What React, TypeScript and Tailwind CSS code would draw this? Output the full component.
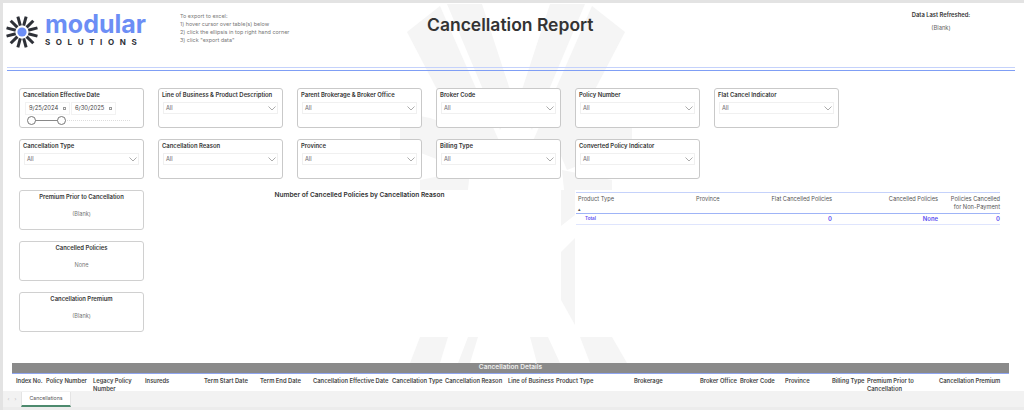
const filters1 = ["Line of Business & Product Description", "Parent Brokerage & Broker Office", "Broker Code", "Policy Number", "Flat Cancel Indicator"];
const filters2 = ["Cancellation Type", "Cancellation Reason", "Province", "Billing Type", "Converted Policy Indicator"];
const kpis = [
  ["Premium Prior to Cancellation", "(Blank)"],
  ["Cancelled Policies", "None"],
  ["Cancellation Premium", "(Blank)"],
];
const cols: [string, string?][] = [
  ["Index No."], ["Policy Number"], ["Legacy Policy", "Number"], ["Insureds"], ["Term Start Date"], ["Term End Date"],
  ["Cancellation Effective Date"], ["Cancellation Type"], ["Cancellation Reason"], ["Line of Business"], ["Product Type"],
  ["Brokerage"], ["Broker Office"], ["Broker Code"], ["Province"], ["Billing Type"], ["Premium Prior to", "Cancellation"], ["Cancellation Premium"],
];

function Chevron() {
  return (
    <svg width="8" height="5" viewBox="0 0 8 5" fill="none" stroke="#888" strokeWidth="0.7">
      <path d="M0.5 0.5 L4 4 L7.5 0.5" />
    </svg>
  );
}

function Logo() {
  return (
    <svg width="34" height="34" viewBox="-17 -17 34 34">
      {[15, 45, 75, 105, 135, 165, 195, 225, 255, 285, 315, 345].map((a) => (
        <line key={a} x1="0" y1="-6.5" x2="0" y2="-16" stroke="#2e3138" strokeWidth="3" transform={`rotate(${a})`} />
      ))}
      <circle r="4.6" fill="#6c8ef5" />
    </svg>
  );
}

const shards = [
  "407,32 440,6 503,150 480,172",
  "447,4 482,4 515,105 500,130",
  "625,32 592,6 529,150 552,172",
  "585,4 550,4 517,105 532,130",
  "400,112 430,118 480,135 465,170 400,145",
  "632,112 602,118 552,135 567,170 632,145",
  "420,180 470,170 468,190 420,190",
  "612,180 562,170 564,190 612,190",
  "410,363 420,337 448,337 440,363",
  "458,363 468,337 478,337 470,363",
  "537,363 530,337 548,337 560,363",
  "590,363 580,337 612,337 627,363",
  "561,190 575,190 575,215 561,226",
  "561,252 575,238 575,325 561,300",
];

function Watermark() {
  return (
    <svg className="absolute left-[-3px] top-[-3px]" width="1024" height="410" viewBox="0 0 1024 410">
      {shards.map((p) => <polygon key={p} points={p} fill="#f5f5f5" />)}
    </svg>
  );
}

function Slicer({ title }: { title: string }) {
  return (
    <div className="h-[40px] rounded-[3px] border border-[#c9c9c9] bg-white px-[3px] pt-[1px]">
      <div className="text-[5.9px] leading-[9px] font-semibold whitespace-nowrap text-[#333]">{title}</div>
      <div className="mt-[3px] mx-[1px] flex h-[12px] items-center justify-between border border-[#f0f0f0] px-[2px] pr-[1px]">
        <span className="text-[5.6px] text-[#666]">All</span>
        <Chevron />
      </div>
    </div>
  );
}

function DateField({ value }: { value: string }) {
  return (
    <div className="flex h-[13px] w-[45px] items-center justify-between border border-[#f2f2f2] px-[3px]">
      <span className="text-[5.8px] whitespace-nowrap text-[#444]">{value}</span>
      <span className="h-[3px] w-[3px] border-[0.5px] border-[#999]" />
    </div>
  );
}

export default function App() {
  return (
    <div className="relative h-[410px] w-[1024px] overflow-hidden border-t-[3px] border-l-[3px] border-[#e3e3e3] bg-white font-['Inter','Liberation_Sans',sans-serif]">
      <Watermark />
      <div className="absolute left-[165px] top-[-3px] h-[3px] w-[93px] bg-[#b5b5b5]" />
      <div className="relative flex flex-col">
        <div className="flex h-[64px]">
          <div className="ml-[2px] mt-[12px] w-[34px] shrink-0"><Logo /></div>
          <div className="ml-[6px] mt-[9px] w-[132px] shrink-0">
            <div className="text-[25px] leading-[25px] font-bold text-[#6c8ef5]">modular</div>
            <div className="mt-[1px] text-[8px] leading-[9px] font-bold tracking-[5.6px] text-[#2e3138]">SOLUTIONS</div>
          </div>
          <div className="ml-[3px] mt-[9px] w-[247px] shrink-0 text-[5.45px] leading-[8px] text-[#777]">
            <div>To export to excel:</div>
            <div>1) hover cursor over table(s) below</div>
            <div>2) click the ellipsis in top right hand corner</div>
            <div>3) click "export data"</div>
          </div>
          <div className="mt-[10px] w-[166px] shrink-0 text-center text-[17.5px] leading-[24px] font-semibold whitespace-nowrap text-[#333]">Cancellation Report</div>
          <div className="ml-[298px] mt-[8px] w-[100px] text-center text-[5.8px] leading-[8px] text-[#333]">
            <div className="font-semibold">Data Last Refreshed:</div>
            <div className="mt-[5px] text-[#666]">(Blank)</div>
          </div>
        </div>
        <div className="ml-[4px] w-[1008px] border-t border-[#c5d2fb]" />
        <div className="ml-[4px] mt-[2px] w-[1008px] border-t border-[#7f9ef5]" />

        <div className="ml-[16px] mt-[17px] grid w-[820px] grid-cols-[125px_125px_125px_125px_125px_125px] gap-x-[14px] gap-y-[11px]">
          <div className="h-[40px] rounded-[3px] border border-[#c9c9c9] bg-white px-[3px] pt-[1px]">
            <div className="text-[5.9px] leading-[9px] font-semibold text-[#333]">Cancellation Effective Date</div>
            <div className="mt-[3px] ml-[2px] flex gap-[1px]">
              <DateField value="9/25/2024" />
              <DateField value="6/30/2025" />
            </div>
            <div className="relative mt-[1px] ml-[7px] flex h-[9px] w-[100px] items-center">
              <div className="h-[1px] w-[30px] bg-[#888]" />
              <div className="h-0 flex-1 border-t border-dotted border-[#ddd]" />
              <div className="absolute left-[-3px] top-0 h-[9px] w-[9px] rounded-full border border-[#777] bg-white" />
              <div className="absolute left-[27px] top-0 h-[9px] w-[9px] rounded-full border border-[#777] bg-white" />
            </div>
          </div>
          {filters1.map((f) => <Slicer key={f} title={f} />)}
          {filters2.map((f) => <Slicer key={f} title={f} />)}
        </div>

        <div className="ml-[16px] mt-[11px] flex h-[142px]">
          <div className="flex w-[125px] flex-col gap-[11px]">
            {kpis.map(([t, v]) => (
              <div key={t} className="h-[40px] rounded-[3px] border border-[#d0d0d0] bg-white pt-[1px] text-center">
                <div className="text-[5.9px] leading-[9px] font-semibold text-[#333]">{t}</div>
                <div className="mt-[9px] text-[5.6px] leading-[9px] text-[#777]">{v}</div>
              </div>
            ))}
          </div>
          <div className="ml-[14px] w-[403px] bg-white pt-[1px] text-center text-[6.6px] leading-[9px] font-semibold text-[#333]">Number of Cancelled Policies by Cancellation Reason</div>
          <div className="ml-[14px] w-[425px] bg-white pt-[2px] pl-[1px]">
            <div className="grid h-[22px] grid-cols-[120px_50px_86px_106px_62px] border-y border-t-[#c5d2fb] border-b-[#9fb4f7] pt-[2px] text-[5.7px] leading-[8px] text-[#555]">
              <div className="pl-[2px]">Product Type<div className="mt-[4px] text-[5px] leading-[5px]">▴</div></div>
              <div>Province</div>
              <div className="text-right whitespace-nowrap">Flat Cancelled Policies</div>
              <div className="text-right">Cancelled Policies</div>
              <div className="text-right whitespace-nowrap">Policies Cancelled<br />for Non-Payment</div>
            </div>
            <div className="grid h-[11px] grid-cols-[120px_50px_86px_106px_62px] items-center border-b border-[#dfe5fd] text-[5.9px] font-semibold text-[#5a4cf0]">
              <div className="pl-[9px] text-[4.6px]">Total</div>
              <div />
              <div className="text-right">0</div>
              <div className="text-right">None</div>
              <div className="text-right">0</div>
            </div>
          </div>
        </div>

        <div className="ml-[9px] mt-[31px] flex h-[11px] w-[997px] items-center justify-center border-b border-[#8fa5f0] bg-[#8a8a8a] text-[6.6px] font-semibold text-[#eee]">Cancellation Details</div>
        <div className="ml-[9px] grid h-[17px] w-[997px] grid-cols-[30px_47px_52px_59px_56px_53px_79px_53px_63px_48px_78px_66px_40px_45px_47px_35px_72px_72px] bg-white pt-[3px] pl-[4px] text-[5.8px] leading-[8px] font-semibold text-[#444]">
          {cols.map(([a, b]) => (
            <div key={a} className="whitespace-nowrap">{a}{b ? <><br />{b}</> : null}</div>
          ))}
        </div>
      </div>
      <div className="absolute bottom-0 left-0 right-0 flex h-[19px] flex-col bg-[#f2f2f2]">
        <div className="mt-[1px] flex h-[15px]">
          <div className="flex w-[18px] items-center justify-center gap-[5px] text-[5px] text-[#bbb]"><span>‹</span><span>›</span></div>
          <div className="flex h-[15px] w-[50px] items-center justify-center border-x border-b-2 border-x-[#e4e4e4] border-b-[#4d8a6e] bg-white text-[5.2px] text-[#555]">Cancellations</div>
        </div>
        <div className="mt-auto h-[3px] bg-[#ececec]" />
      </div>
    </div>
  );
}
